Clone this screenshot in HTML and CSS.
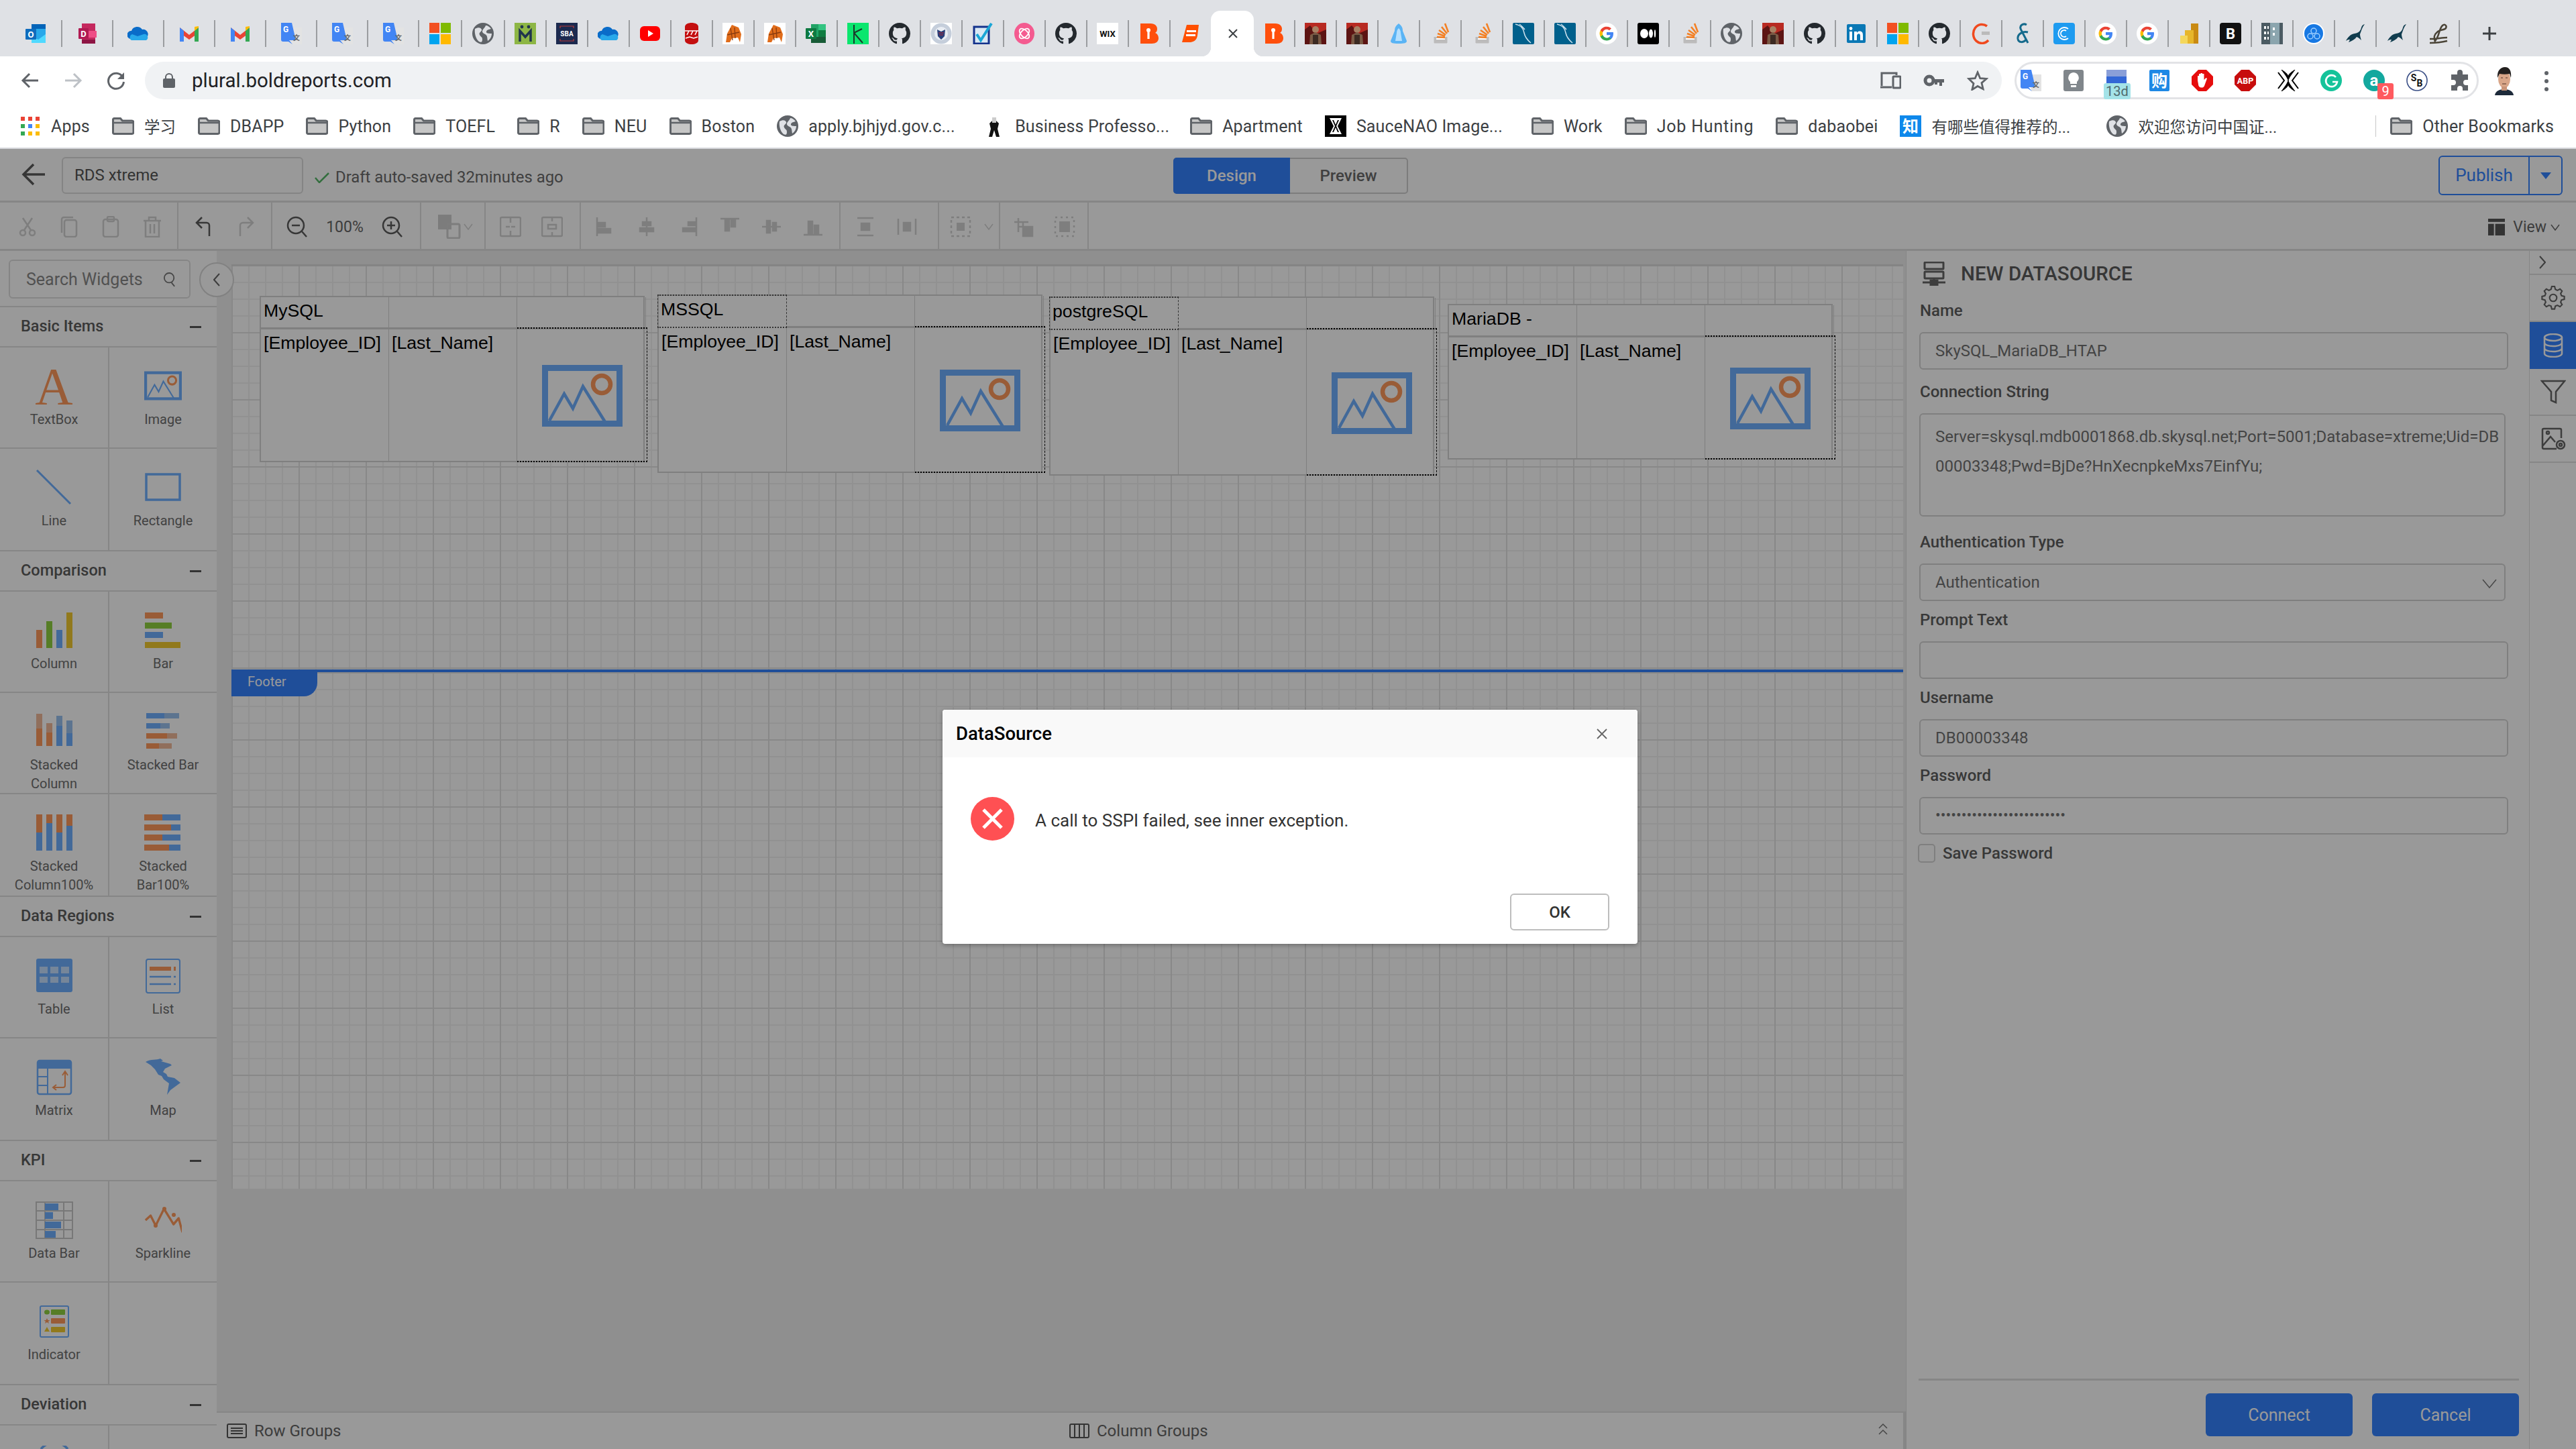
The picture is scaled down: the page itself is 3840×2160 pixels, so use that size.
FILE: index.html
```html
<!DOCTYPE html>
<html lang="en">
<head>
  <meta charset="UTF-8">
  <meta name="viewport" content="width=device-width, initial-scale=1.0">
  <title>Bold Reports Designer</title>
  <link rel="stylesheet" href="styles.css">
</head>
<body>
  <!-- shared favicons and widget icons -->
  <svg class="defs" width="0" height="0">
    <symbol id="outlook" viewBox="0 0 32 32"><rect x="9" y="2" width="21" height="28" fill="#28a8ea"/><rect x="9" y="2" width="21" height="7" fill="#0364b8"/><path d="M9 20l10 5 11-8v13H9z" fill="#50d9ff"/><rect x="0" y="9" width="16" height="16" rx="1" fill="#0f6cbd"/></symbol>
    <symbol id="onenote" viewBox="0 0 32 32"><rect x="8" y="1" width="20" height="30" fill="#c4285e"/><rect x="18" y="12" width="12" height="10" fill="#ef4d86"/><rect x="8" y="25" width="20" height="6" fill="#8e1544"/><rect x="3" y="8" width="15" height="16" rx="1" fill="#b01a52"/></symbol>
    <symbol id="onedrive" viewBox="0 0 32 32"><path d="M5 24a6 6 0 0 1 1-12 9 9 0 0 1 16-2 7 7 0 0 1 3 14z" fill="#0a6cc9"/><path d="M6 26a5 5 0 0 1 1-9l8 3 9-3a5 5 0 0 1 4 9z" fill="#28a8ea"/></symbol>
    <symbol id="gmail" viewBox="0 0 32 32"><path d="M2 7l14 11L30 7v8L16 25 2 15z" fill="#ea4335"/><path d="M2 7v21h6V12z" fill="#4285f4"/><path d="M24 12v16h6V7z" fill="#34a853"/><path d="M24 6v6l6-5V5z" fill="#fbbc04"/></symbol>
    <symbol id="gtrans" viewBox="0 0 32 32"><path d="M13 7h19v25H17z" fill="#e3e3e3"/><path d="M1 0h16l6 26H13l5 6-6-4H4a3 3 0 0 1-3-3z" fill="#4285f4"/></symbol>
    <symbol id="ms" viewBox="0 0 32 32"><rect width="15" height="15" fill="#f25022"/><rect x="17" width="15" height="15" fill="#7fba00"/><rect y="17" width="15" height="15" fill="#00a4ef"/><rect x="17" y="17" width="15" height="15" fill="#ffb900"/></symbol>
    <symbol id="globe" viewBox="0 0 32 32"><circle cx="16" cy="16" r="16" fill="#5f6368"/><path d="M4 9c5-3 9-2 10 1s-5 4-3 8 4 2 4 7-3 4-5 3C5 24 3 15 4 9zM20 4c3 0 6 2 8 5-3 1-6 1-7 4s5 3 8 3c0 5-3 9-6 11-1-5 0-8-4-10s-5-4-3-7 3-3 4-6z" fill="#dfe1e5"/></symbol>
    <symbol id="meet" viewBox="0 0 32 32"><rect width="32" height="32" fill="#8db645"/><path d="M8 28V12l8 9 8-9v16" fill="none" stroke="#20354d" stroke-width="3.5"/><circle cx="11" cy="6" r="2.4" fill="#20354d"/><circle cx="21" cy="6" r="2.4" fill="#20354d"/></symbol>
    <symbol id="sba" viewBox="0 0 32 32"><rect width="32" height="32" fill="#1c2a4f"/><path d="M6 8V5h20v3M6 24v3h20v-3" fill="none" stroke="#b73b3b" stroke-width="1.2"/></symbol>
    <symbol id="yt" viewBox="0 0 32 32"><rect x="1" y="5" width="30" height="22" rx="6" fill="#f00"/><path d="M13 11l8 5-8 5z" fill="#fff"/></symbol>
    <symbol id="redcan" viewBox="0 0 32 32"><path d="M6 6c0-8 20-8 20 0v20c0 8-20 8-20 0z" fill="#c40f10"/><path d="M6 12h20M9 18l3-6M15 18l3-6M21 18l3-6M7 23l6-2 6 2 6-2" stroke="#fff" stroke-width="1.6" fill="none"/></symbol>
    <symbol id="bull" viewBox="0 0 32 32"><rect width="32" height="32" fill="#fff"/><path d="M5 29l2-13 7-13 10 4 4 10-2 12-3-7-9 1-3 6z" fill="#e06c1a"/><path d="M12 8l3 18M18 7l1 16M7 18l18-4" stroke="#8a3b0e" stroke-width="1.3"/></symbol>
    <symbol id="excel" viewBox="0 0 32 32"><rect x="8" y="2" width="22" height="28" fill="#21a366"/><rect x="19" y="2" width="11" height="9" fill="#33c481"/><rect x="8" y="21" width="22" height="9" fill="#185c37"/><rect x="19" y="11" width="11" height="10" fill="#107c41"/><rect y="8" width="16" height="16" rx="1" fill="#0e7a42"/></symbol>
    <symbol id="kgreen" viewBox="0 0 32 32"><rect width="32" height="32" fill="#0be66e"/><path d="M10 3v28M10 15l12-6M10 15l13 15" stroke="#1a3b2b" stroke-width="2" fill="none"/></symbol>
    <symbol id="github" viewBox="0 0 16 16"><path fill="#24292e" d="M8 0C3.58 0 0 3.58 0 8c0 3.54 2.29 6.53 5.47 7.59.4.07.55-.17.55-.38 0-.19-.01-.82-.01-1.49-2.01.37-2.53-.49-2.69-.94-.09-.23-.48-.94-.82-1.13-.28-.15-.68-.52-.01-.53.63-.01 1.08.58 1.23.82.72 1.21 1.87.87 2.33.66.07-.52.28-.87.51-1.07-1.78-.2-3.64-.89-3.64-3.95 0-.87.31-1.59.82-2.15-.08-.2-.36-1.02.08-2.12 0 0 .67-.21 2.2.82a7.4 7.4 0 0 1 4 0c1.53-1.04 2.2-.82 2.2-.82.44 1.1.16 1.92.08 2.12.51.56.82 1.27.82 2.15 0 3.07-1.87 3.75-3.65 3.95.29.25.54.73.54 1.48 0 1.07-.01 1.93-.01 2.2 0 .21.15.46.55.38A8.01 8.01 0 0 0 16 8c0-4.42-3.58-8-8-8z"/></symbol>
    <symbol id="dhs" viewBox="0 0 32 32"><rect width="32" height="32" fill="#fff"/><circle cx="16" cy="16" r="15.500" fill="#c5cedb"/><circle cx="16" cy="16" r="10" fill="#e9edf3"/><path d="M10 10l6 3 6-3-1 10-5 5-5-5z" fill="#28407a"/><path d="M12 15h8M13 18h6" stroke="#b5202b" stroke-width="1.200"/></symbol>
    <symbol id="check" viewBox="0 0 32 32"><rect x="3" y="6" width="22" height="25" fill="#d9e8f4" stroke="#14328c" stroke-width="3"/><path d="M7 17l6 9L29 1" fill="none" stroke="#1aa6d6" stroke-width="4"/></symbol>
    <symbol id="pink" viewBox="0 0 32 32"><ellipse cx="16" cy="16" rx="15" ry="16" fill="#f45b90"/><ellipse cx="16" cy="16" rx="9" ry="5" fill="none" stroke="#fff" stroke-width="1.8" transform="rotate(45 16 16)"/><ellipse cx="16" cy="16" rx="9" ry="5" fill="none" stroke="#fff" stroke-width="1.8" transform="rotate(-45 16 16)"/></symbol>
    <symbol id="white" viewBox="0 0 32 32"><rect width="32" height="32" fill="#fff"/></symbol>
    <symbol id="bold" viewBox="0 0 32 32"><path d="M3 1h15c7 0 10 4 10 8 0 3-1 5-3 6 3 1 5 4 5 8 0 5-4 8-10 8H3z" fill="#ff4f0c"/><circle cx="15" cy="11" r="3" fill="#fff"/><rect x="13.4" y="12" width="3.2" height="12" fill="#fff"/></symbol>
    <symbol id="orange-e" viewBox="0 0 32 32"><path d="M10 3h18l-2 16c-1 7-6 10-12 10H3z" fill="#ff5000"/><rect x="10" y="11" width="14" height="3" fill="#fff"/><rect x="9" y="17" width="14" height="3" fill="#fff"/></symbol>
    <symbol id="warrior" viewBox="0 0 32 32"><rect width="32" height="32" fill="#5c1413"/><path d="M0 0h32v10L18 16 8 4 0 10z" fill="#b82a22"/><circle cx="16" cy="10" r="5" fill="#a88063"/><path d="M7 32l1-14 8-4 8 4 1 14z" fill="#7a5a45"/><path d="M12 18h8v14h-8z" fill="#3c2a22"/></symbol>
    <symbol id="bell" viewBox="0 0 32 32"><path d="M16 1c4 3 6 6 6 11l6 15c0 3-3 4-12 4S4 30 4 27l6-15c0-5 2-8 6-11z" fill="#5ab4f5"/><path d="M16 8c2 2 3 4 3 7l2 12H11l2-12c0-3 1-5 3-7z" fill="#b5e0ff"/></symbol>
    <symbol id="so" viewBox="0 0 32 32"><path d="M7 21v9h19v-9" fill="#bcbbbb" stroke="#bcbbbb"/><path d="M10 25h13v-2H10z" fill="#fff"/><path d="M11 21l12 1M12 16l11 4M14 11l10 7M18 6l8 10M23 1l5 13" stroke="#f48024" stroke-width="2.6"/></symbol>
    <symbol id="mysql" viewBox="0 0 32 32"><rect width="32" height="32" rx="2" fill="#00608c"/><path d="M4 2c5 1 11 3 13 13 1 5 4 10 10 15M10 2c3 2 6 6 8 8" fill="none" stroke="#cfe3ee" stroke-width="1.5"/></symbol>
    <symbol id="google" viewBox="0 0 32 32"><circle cx="16" cy="16" r="16" fill="#fff"/><path d="M26 16.3c0-.8-.1-1.5-.2-2.2H16v4.2h5.6a4.8 4.8 0 0 1-2.1 3.2v2.6h3.4c2-1.8 3.1-4.6 3.1-7.8z" fill="#4285f4"/><path d="M16 26.5c2.8 0 5.2-.9 6.9-2.5l-3.4-2.6c-.9.6-2.1 1-3.5 1-2.7 0-5-1.8-5.8-4.3H6.7v2.7a10.5 10.5 0 0 0 9.3 5.7z" fill="#34a853"/><path d="M10.2 18.1a6.3 6.3 0 0 1 0-4.1v-2.7H6.7a10.5 10.5 0 0 0 0 9.5z" fill="#fbbc05"/><path d="M16 9.7c1.5 0 2.9.5 4 1.6l3-3A10.5 10.5 0 0 0 6.7 11.3l3.5 2.7c.8-2.5 3.1-4.3 5.8-4.3z" fill="#ea4335"/></symbol>
    <symbol id="medium" viewBox="0 0 32 32"><rect width="32" height="32" rx="3" fill="#000"/><ellipse cx="10" cy="16" rx="6" ry="7" fill="#fff"/><ellipse cx="20" cy="16" rx="3" ry="6.5" fill="#fff"/><ellipse cx="26" cy="16" rx="1.2" ry="6" fill="#fff"/></symbol>
    <symbol id="linkedin" viewBox="0 0 32 32"><rect x="2" y="2" width="28" height="28" rx="2" fill="#0a78b5"/><rect x="6" y="13" width="4" height="13" fill="#fff"/><circle cx="8" cy="8.5" r="2.4" fill="#fff"/><path d="M13 13h4v2c1-2 3-2.400 4-2.400 4 0 5 2.400 5 6V26h-4v-6.500c0-2-.5-3.300-2-3.300-2 0-3 1.300-3 3.300V26h-4z" fill="#fff"/></symbol>
    <symbol id="carc" viewBox="0 0 32 32"><path d="M25 5a13 14 0 1 0 2 21" fill="none" stroke="#f0491e" stroke-width="3.500"/><rect x="17" y="13" width="12" height="5" fill="#bbb"/></symbol>
    <symbol id="amp" viewBox="0 0 32 32"><path d="M22 3c-5-3-12 1-8 8l10 19M24 14c-8-2-16 3-15 10 1 6 9 6 12 1" fill="none" stroke="#156a8c" stroke-width="3"/></symbol>
    <symbol id="eblue" viewBox="0 0 32 32"><rect width="32" height="32" rx="4" fill="#1e9bf0"/><path d="M22 9a9 9 0 1 0 0 14M19 12a5 5 0 1 0 0 8" fill="none" stroke="#fff" stroke-width="1.800"/></symbol>
    <symbol id="pbi" viewBox="0 0 32 32"><rect x="19" y="1" width="11" height="30" fill="#c98a12"/><rect x="10" y="11" width="13" height="20" fill="#e7b62a"/><rect x="3" y="19" width="11" height="12" fill="#f4d75c"/></symbol>
    <symbol id="building" viewBox="0 0 32 32"><rect width="32" height="32" fill="#8ba5ae"/><rect width="13" height="32" fill="#4b5b63"/><path d="M4 5h3v4H4zM9 5h2v4H9zM4 13h3v4H4zM9 13h2v4H9zM4 21h3v4H4zM9 21h2v4H9zM17 7h3v4h-3zM17 15h3v4h-3z" fill="#fff"/><rect x="27" width="5" height="32" fill="#4b5b63"/></symbol>
    <symbol id="bluecircle" viewBox="0 0 32 32"><circle cx="16" cy="16" r="16" fill="#fff"/><circle cx="16" cy="16" r="14" fill="#1778e3"/><circle cx="16" cy="12" r="4" fill="none" stroke="#9fd0ff" stroke-width="1.500"/><circle cx="11" cy="20" r="4" fill="none" stroke="#9fd0ff" stroke-width="1.500"/><circle cx="21" cy="20" r="4" fill="none" stroke="#9fd0ff" stroke-width="1.500"/></symbol>
    <symbol id="maria" viewBox="0 0 32 32"><path d="M30 2c-3 1-4 2-5 5-1 4-3 8-10 9-6 1-10 5-13 11 3-2 4-2 6-2l-2 4c5-2 9-4 12-8 3 1 6 4 7 5-1-3-2-6-2-9 2-5 3-10 7-15z" fill="#103c4e"/></symbol>
    <symbol id="script" viewBox="0 0 32 32"><path d="M3 30c8 0 18-1 26-3M3 24c10 0 18-2 26-2M10 28c8-8 6-18 12-24 3-3 7 0 5 4-2 3-8 2-12 5-5 4-7 8-4 15" fill="none" stroke="#4a4437" stroke-width="2.500"/></symbol>
    <symbol id="folder" viewBox="0 0 33 26"><path d="M1.500 4a2 2 0 0 1 2-2.500h9l3 3.500h14a2.500 2.500 0 0 1 2.500 2.500V22a2.500 2.500 0 0 1-2.500 2.500h-26A2 2 0 0 1 1.500 22z" fill="#c6c6c6" stroke="#5f6368" stroke-width="3"/><path d="M2 8h29" stroke="#5f6368" stroke-width="2.500"/></symbol>

    <symbol id="pic" viewBox="0 0 120 92"><path d="M4.500 4.500h111v83H4.500z" fill="none" stroke="#6fb0ff" stroke-width="9"/><path d="M11 83l22-40 13 22 15-33 33 53" fill="none" stroke="#6fb0ff" stroke-width="4.500"/><circle cx="89" cy="29" r="13" fill="none" stroke="#ff9a5c" stroke-width="6.500"/></symbol>
    <symbol id="gear" viewBox="0 0 32 34"><path d="M14 1h4l1 4 3 1.500 3.600-2 2.900 2.900-2 3.600 1.200 3 4 1v4l-4 1-1.200 3 2 3.600-2.900 2.900-3.600-2-3 1.200-1 4h-4l-1-4-3-1.200-3.600 2-2.900-2.900 2-3.600-1.200-3-4-1v-4l4-1 1.200-3-2-3.600 2.900-2.900 3.600 2 3-1.500z" fill="none" stroke="currentColor" stroke-width="2"/><circle cx="16" cy="17" r="5" fill="none" stroke="currentColor" stroke-width="2"/></symbol>
  </svg>

  <div class="chrome">
    <div class="tabstrip">
      <div class="tab wide"><svg class="fav" viewBox="0 0 32 32"><use href="#outlook"/><text x="8" y="22" class="ico-t" font-size="13" text-anchor="middle" fill="#fff">O</text></svg></div>
      <div class="tab wide"><svg class="fav" viewBox="0 0 32 32"><use href="#onenote"/><text x="10.500" y="21" class="ico-t" font-size="13" text-anchor="middle" fill="#fff">D</text></svg></div>
      <div class="tab wide"><svg class="fav"><use href="#onedrive"/></svg></div>
      <div class="tab wide"><svg class="fav"><use href="#gmail"/></svg></div>
      <div class="tab wide"><svg class="fav"><use href="#gmail"/></svg></div>
      <div class="tab wide"><svg class="fav" viewBox="0 0 32 32"><use href="#gtrans"/><text x="8" y="14" class="ico-t" font-size="12" text-anchor="middle" fill="#fff">G</text><text x="24" y="26" class="ico-t" font-size="10" text-anchor="middle" fill="#666">文</text></svg></div>
      <div class="tab wide"><svg class="fav" viewBox="0 0 32 32"><use href="#gtrans"/><text x="8" y="14" class="ico-t" font-size="12" text-anchor="middle" fill="#fff">G</text><text x="24" y="26" class="ico-t" font-size="10" text-anchor="middle" fill="#666">文</text></svg></div>
      <div class="tab wide"><svg class="fav" viewBox="0 0 32 32"><use href="#gtrans"/><text x="8" y="14" class="ico-t" font-size="12" text-anchor="middle" fill="#fff">G</text><text x="24" y="26" class="ico-t" font-size="10" text-anchor="middle" fill="#666">文</text></svg></div>
      <div class="tab mid"><svg class="fav"><use href="#ms"/></svg></div>
      <div class="tab mid"><svg class="fav"><use href="#globe"/></svg></div>
      <div class="tab"><svg class="fav"><use href="#meet"/></svg></div>
      <div class="tab"><svg class="fav" viewBox="0 0 32 32"><use href="#sba"/><text x="16" y="20" class="ico-t" font-size="10" text-anchor="middle" fill="#fff">SBA</text></svg></div>
      <div class="tab"><svg class="fav"><use href="#onedrive"/></svg></div>
      <div class="tab"><svg class="fav"><use href="#yt"/></svg></div>
      <div class="tab"><svg class="fav"><use href="#redcan"/></svg></div>
      <div class="tab"><svg class="fav"><use href="#bull"/></svg></div>
      <div class="tab"><svg class="fav"><use href="#bull"/></svg></div>
      <div class="tab"><svg class="fav" viewBox="0 0 32 32"><use href="#excel"/><text x="8" y="21" class="ico-t" font-size="13" text-anchor="middle" fill="#fff">X</text></svg></div>
      <div class="tab"><svg class="fav"><use href="#kgreen"/></svg></div>
      <div class="tab"><svg class="fav"><use href="#github"/></svg></div>
      <div class="tab"><svg class="fav"><use href="#dhs"/></svg></div>
      <div class="tab"><svg class="fav"><use href="#check"/></svg></div>
      <div class="tab"><svg class="fav"><use href="#pink"/></svg></div>
      <div class="tab"><svg class="fav"><use href="#github"/></svg></div>
      <div class="tab"><svg class="fav" viewBox="0 0 32 32"><use href="#white"/><text x="16" y="21" class="ico-t" font-size="13" text-anchor="middle" fill="#111">WIX</text></svg></div>
      <div class="tab"><svg class="fav"><use href="#bold"/></svg></div>
      <div class="tab"><svg class="fav"><use href="#orange-e"/></svg></div>
      <div class="tab active"><svg class="tab-x" viewBox="0 0 16 16"><path d="M2 2l12 12M14 2L2 14"/></svg></div>
      <div class="tab"><svg class="fav"><use href="#bold"/></svg></div>
      <div class="tab"><svg class="fav"><use href="#warrior"/></svg></div>
      <div class="tab"><svg class="fav"><use href="#warrior"/></svg></div>
      <div class="tab"><svg class="fav"><use href="#bell"/></svg></div>
      <div class="tab"><svg class="fav"><use href="#so"/></svg></div>
      <div class="tab"><svg class="fav"><use href="#so"/></svg></div>
      <div class="tab"><svg class="fav"><use href="#mysql"/></svg></div>
      <div class="tab"><svg class="fav"><use href="#mysql"/></svg></div>
      <div class="tab"><svg class="fav"><use href="#google"/></svg></div>
      <div class="tab"><svg class="fav"><use href="#medium"/></svg></div>
      <div class="tab"><svg class="fav"><use href="#so"/></svg></div>
      <div class="tab"><svg class="fav"><use href="#globe"/></svg></div>
      <div class="tab"><svg class="fav"><use href="#warrior"/></svg></div>
      <div class="tab"><svg class="fav"><use href="#github"/></svg></div>
      <div class="tab"><svg class="fav"><use href="#linkedin"/></svg></div>
      <div class="tab"><svg class="fav"><use href="#ms"/></svg></div>
      <div class="tab"><svg class="fav"><use href="#github"/></svg></div>
      <div class="tab"><svg class="fav"><use href="#carc"/></svg></div>
      <div class="tab"><svg class="fav"><use href="#amp"/></svg></div>
      <div class="tab"><svg class="fav"><use href="#eblue"/></svg></div>
      <div class="tab"><svg class="fav"><use href="#google"/></svg></div>
      <div class="tab"><svg class="fav"><use href="#google"/></svg></div>
      <div class="tab"><svg class="fav"><use href="#pbi"/></svg></div>
      <div class="tab"><svg class="fav" viewBox="0 0 32 32"><rect width="32" height="32" rx="4" fill="#111"/><text x="16" y="24" class="ico-t" font-size="22" text-anchor="middle" fill="#fff">B</text></svg></div>
      <div class="tab"><svg class="fav"><use href="#building"/></svg></div>
      <div class="tab"><svg class="fav"><use href="#bluecircle"/></svg></div>
      <div class="tab"><svg class="fav"><use href="#maria"/></svg></div>
      <div class="tab"><svg class="fav"><use href="#maria"/></svg></div>
      <div class="tab"><svg class="fav"><use href="#script"/></svg></div>
      <svg class="new-tab" viewBox="0 0 24 24"><path d="M12 2v20M2 12h20"/></svg>
    </div>

    <div class="omnirow">
      <svg class="nav-btn" viewBox="0 0 28 28"><path d="M26 14H4M13 4L3 14l10 10"/></svg>
      <svg class="nav-btn off" viewBox="0 0 28 28"><path d="M2 14h22M15 4l10 10-10 10"/></svg>
      <svg class="nav-btn reload" viewBox="0 0 28 28"><path d="M24 9a11.500 11.500 0 1 0 1.500 7"/><path class="solid" d="M26 2v10H16z"/></svg>
      <div class="omnibox">
        <svg class="lock" viewBox="0 0 18 22"><path d="M4 9V6a5 5 0 0 1 10 0v3" fill="none" stroke="#5f6368" stroke-width="2"/><rect y="8" width="18" height="14" rx="2" fill="#5f6368"/></svg>
        <span class="url">plural.boldreports.com</span>
        <svg class="omni-ic devices" viewBox="0 0 32 28"><path d="M3 22V3h22v3M1 24h17" fill="none" stroke="#5f6368" stroke-width="3"/><rect x="20" y="8" width="11" height="17" rx="1" fill="none" stroke="#5f6368" stroke-width="3"/></svg>
        <svg class="omni-ic key" viewBox="0 0 30 22"><circle cx="8" cy="11" r="6" fill="none" stroke="#5f6368" stroke-width="5"/><path d="M14 9h16v5h-3v5h-4v-5h-3v3h-4v-3h-2z" fill="#5f6368"/></svg>
        <svg class="omni-ic star" viewBox="0 0 32 32"><path d="M16 3l4 9.500 10 .8-7.600 6.500 2.300 9.700L16 25l-8.700 5.500 2.300-9.700L2 13.300l10-.8z" fill="none" stroke="#5f6368" stroke-width="3"/></svg>
      </div>
      <div class="ext-pill">
        <svg class="ext" viewBox="0 0 32 32"><use href="#gtrans"/><text x="8" y="14" class="ico-t" font-size="12" text-anchor="middle" fill="#fff">G</text><text x="24" y="26" class="ico-t" font-size="10" text-anchor="middle" fill="#666">文</text></svg>
        <svg class="ext" viewBox="0 0 32 32"><rect x="1" width="30" height="32" rx="3" fill="#80868b"/><path d="M16 4a8 8 0 0 0-5 14v3h10v-3a8 8 0 0 0-5-14z" fill="#fff"/><rect x="12" y="23" width="8" height="3" fill="#fff"/></svg>
        <div class="ext badge-wrap"><svg class="ext-in" viewBox="0 0 32 32"><rect x="1" y="8" width="30" height="20" rx="2" fill="#3367d6"/><rect x="1" width="30" height="10" fill="#8a9fd8"/></svg><span class="badge cyan">13d</span></div>
        <svg class="ext" viewBox="0 0 32 32"><rect x="1" width="30" height="32" rx="2" fill="#1e88e5"/><text x="16" y="25" class="ico-t" font-size="24" text-anchor="middle" fill="#fff">购</text></svg>
        <svg class="ext" viewBox="0 0 32 32"><path d="M10 0h12l10 10v12L22 32H10L0 22V10z" fill="#e60d0d"/><path d="M9 16V9l2 0v5V6h2.500v8V5H16v9V6h2.500v9l3-3 1.500 1-4 11c-1 2-2 2.500-4 2.500-3 0-5-2-5-5z" fill="#fff"/></svg>
        <svg class="ext" viewBox="0 0 32 32"><path d="M10 0h12l10 10v12L22 32H10L0 22V10z" fill="#c70d0d"/><text x="16" y="21" class="ico-t" font-size="12.500" text-anchor="middle" fill="#fff">ABP</text></svg>
        <svg class="ext" viewBox="0 0 32 32"><path d="M6 0c6 8 9 12 10 16-1 4-4 8-10 16 8-5 10-8 10-11 0 3 2 6 10 11-6-8-9-12-10-16 1-4 4-8 10-16-8 5-10 8-10 11 0-3-2-6-10-11z" fill="#000" stroke="#000" stroke-width="1"/><path d="M1 4l9 12-9 12M31 4l-9 12 9 12" fill="none" stroke="#000" stroke-width="2"/></svg>
        <svg class="ext" viewBox="0 0 32 32"><circle cx="16" cy="16" r="16" fill="#15c39a"/><path d="M23 11a8.500 8.500 0 1 0 2 7h-7" fill="none" stroke="#fff" stroke-width="2.600"/></svg>
        <div class="ext badge-wrap"><svg class="ext-in" viewBox="0 0 32 32"><circle cx="16" cy="16" r="16" fill="#13a89e"/><text x="16" y="24" class="ico-t" font-size="24" text-anchor="middle" fill="#fff">a</text></svg><span class="badge red">9</span></div>
        <svg class="ext" viewBox="0 0 32 32"><circle cx="16" cy="16" r="15" fill="#fff" stroke="#3a4f86" stroke-width="1.600"/><text x="11" y="17" class="ico-t" font-size="14" text-anchor="middle" fill="#111">S</text><text x="20" y="25" class="ico-t" font-size="14" text-anchor="middle" fill="#111">B</text></svg>
        <svg class="ext" viewBox="0 0 32 32"><path d="M12 4a4 4 0 0 1 8 0v3h8v8h-3a4 4 0 0 0 0 8h3v8H20v-3a4 4 0 0 0-8 0v3H3V23h3a4 4 0 0 0 0-8H3V7h9z" fill="#5f6368"/></svg>
      </div>
      <svg class="avatar" viewBox="0 0 28 42"><path d="M0 42c1-7 8-9 14-9s13 2 14 9z" fill="#1d2a3a"/><ellipse cx="14" cy="18" rx="9" ry="13" fill="#d9a689"/><path d="M4 16C3 5 9 0 15 0c7 0 10 6 9 16l-2-6c-5 1-10 1-15 0z" fill="#23201f"/><rect x="10" y="29" width="8" height="6" fill="#c99478"/><path d="M9 16h3M16 16h3M11 25h6" stroke="#54352a" stroke-width="1.200"/></svg>
      <svg class="kebab" viewBox="0 0 6 30"><circle cx="3" cy="3" r="3"/><circle cx="3" cy="15" r="3"/><circle cx="3" cy="27" r="3"/></svg>
    </div>

    <div class="bookmarks">
      <div class="bm"><svg class="apps" viewBox="0 0 28 28"><path fill="#ea4335" d="M0 0h6v6H0zM11 0h6v6h-6zM22 0h6v6h-6z"/><path fill="#34a853" d="M0 11h6v6H0z"/><path fill="#4285f4" d="M11 11h6v6h-6z"/><path fill="#fbbc04" d="M22 11h6v6h-6z"/><path fill="#34a853" d="M0 22h6v6H0z"/><path fill="#fbbc04" d="M11 22h6v6h-6zM22 22h6v6h-6z"/></svg><span>Apps</span></div>
      <div class="bm"><svg class="folder"><use href="#folder"/></svg><span class="cjk">学习</span></div>
      <div class="bm"><svg class="folder"><use href="#folder"/></svg><span>DBAPP</span></div>
      <div class="bm"><svg class="folder"><use href="#folder"/></svg><span>Python</span></div>
      <div class="bm"><svg class="folder"><use href="#folder"/></svg><span>TOEFL</span></div>
      <div class="bm"><svg class="folder"><use href="#folder"/></svg><span>R</span></div>
      <div class="bm"><svg class="folder"><use href="#folder"/></svg><span>NEU</span></div>
      <div class="bm"><svg class="folder"><use href="#folder"/></svg><span>Boston</span></div>
      <div class="bm trunc"><svg class="bm-fav"><use href="#globe"/></svg><span>apply.bjhjyd.gov.c...</span></div>
      <div class="bm trunc"><svg class="bm-fav" viewBox="0 0 32 32"><path d="M8 32l3-12-2-8 4-4V3h6v5l4 4-2 8 3 12h-5l-3-10-3 10z" fill="#111"/><path d="M13 3h6v8h-6z" fill="#ccc"/></svg><span>Business Professo...</span></div>
      <div class="bm"><svg class="folder"><use href="#folder"/></svg><span>Apartment</span></div>
      <div class="bm trunc"><svg class="bm-fav" viewBox="0 0 32 32"><rect width="32" height="32" fill="#000"/><path d="M7 4h18L19 16l6 12H7l6-12z" fill="#fff"/><path d="M11 7l4 9-4 9h2l3-7 3 7h2l-4-9 4-9h-2l-3 7-3-7z" fill="#000"/></svg><span>SauceNAO Image...</span></div>
      <div class="bm"><svg class="folder"><use href="#folder"/></svg><span>Work</span></div>
      <div class="bm"><svg class="folder"><use href="#folder"/></svg><span class="jobs">Job Hunting</span></div>
      <div class="bm"><svg class="folder"><use href="#folder"/></svg><span>dabaobei</span></div>
      <div class="bm trunc"><svg class="bm-fav" viewBox="0 0 32 32"><rect width="32" height="32" fill="#0e88eb"/><text x="16" y="25" class="ico-t" font-size="24" text-anchor="middle" fill="#fff">知</text></svg><span class="cjk">有哪些值得推荐的...</span></div>
      <div class="bm trunc"><svg class="bm-fav"><use href="#globe"/></svg><span class="cjk">欢迎您访问中国证...</span></div>
      <div class="bm-sep"></div>
      <div class="bm"><svg class="folder"><use href="#folder"/></svg><span>Other Bookmarks</span></div>
    </div>
  </div>

  <div class="app">
    <header class="app-head">
      <svg class="back" viewBox="0 0 36 34"><path d="M35 17H3M18 2L3 17l15 15"/></svg>
      <div class="doc-name">RDS xtreme</div>
      <svg class="saved-check" viewBox="0 0 22 16"><path d="M1 8l6 7L21 1"/></svg>
      <span class="saved">Draft auto-saved 32minutes ago</span>
      <div class="mode">
        <span class="mode-btn on">Design</span>
        <span class="mode-btn">Preview</span>
      </div>
      <div class="publish">
        <span class="pub-main">Publish</span>
        <span class="pub-arrow"><i></i></span>
      </div>
    </header>

    <div class="toolbar">
      <div class="tb-group g1">
        <svg class="tb off" viewBox="0 0 32 32"><circle cx="9" cy="25" r="4"/><circle cx="23" cy="25" r="4"/><path d="M11 21L23 3M21 21L9 3"/></svg>
        <svg class="tb off" viewBox="0 0 32 32"><rect x="9" y="6" width="18" height="25" rx="3"/><path d="M5 25V5a3 3 0 0 1 3-3h14"/></svg>
        <svg class="tb off" viewBox="0 0 32 32"><rect x="5" y="5" width="22" height="26" rx="3"/><rect x="11" y="1" width="10" height="7" rx="2"/></svg>
        <svg class="tb off" viewBox="0 0 32 32"><path d="M3 7h26M11 7V2h10v5M6 7v24h20V7M13 12v14M19 12v14"/></svg>
      </div>
      <div class="tb-group g2">
        <svg class="tb" viewBox="0 0 32 32"><path d="M24 30V14a4 4 0 0 0-4-4H6M13 2l-8 8 8 8"/></svg>
        <svg class="tb off" viewBox="0 0 32 32"><path d="M8 30V14a4 4 0 0 1 4-4h14M19 2l8 8-8 8"/></svg>
      </div>
      <div class="tb-group g3">
        <svg class="tb" viewBox="0 0 32 32"><circle cx="14" cy="14" r="12"/><path d="M23 23l7 8M8 14h12"/></svg>
        <span class="zoom-pct">100%</span>
        <svg class="tb" viewBox="0 0 32 32"><circle cx="14" cy="14" r="12"/><path d="M23 23l7 8M8 14h12M14 8v12"/></svg>
      </div>
      <div class="tb-group g4">
        <svg class="tb-fill" viewBox="0 0 34 36"><rect x="0" y="0" width="20" height="22" fill="#cfcfcf" stroke="none"/><rect x="14" y="14" width="18" height="21" rx="2" fill="none" stroke="#d0d0d0" stroke-width="3"/></svg>
        <svg class="tb-chev" viewBox="0 0 14 10"><path d="M1 1l6 8 6-8"/></svg>
      </div>
      <div class="tb-group g5">
        <svg class="tb off" viewBox="0 0 32 32"><rect x="1" y="2" width="30" height="28" rx="2"/><path d="M16 2v8M16 22v8M9 16h6M17 16h6" /></svg>
        <svg class="tb off" viewBox="0 0 32 32"><rect x="1" y="2" width="30" height="28" rx="2"/><path d="M16 2v6M16 24v6M10 13h12v6H10z"/></svg>
      </div>
      <div class="tb-group g6">
        <svg class="tb off" viewBox="0 0 32 32"><path d="M4 2v28M4 10h12v6H4zM4 19h20v6H4z" class="fillish"/></svg>
        <svg class="tb off" viewBox="0 0 32 32"><path d="M16 2v28M10 9h12v5H10zM6 18h20v5H6z" class="fillish"/></svg>
        <svg class="tb off" viewBox="0 0 32 32"><path d="M28 2v28M16 9h12v5H16zM8 18h20v5H8z" class="fillish"/></svg>
        <svg class="tb off" viewBox="0 0 32 32"><path d="M2 4h28M9 4v18h6V4zM18 4v12h6V4z" class="fillish"/></svg>
        <svg class="tb off" viewBox="0 0 32 32"><path d="M2 16h28M9 7v18h5V7zM18 10v12h5V10z" class="fillish"/></svg>
        <svg class="tb off" viewBox="0 0 32 32"><path d="M2 28h28M9 8v20h6V8zM18 14v14h6V14z" class="fillish"/></svg>
      </div>
      <div class="tb-group g7">
        <svg class="tb off" viewBox="0 0 32 32"><path d="M4 3h24M4 29h24M10 11h12v10H10z" class="fillish"/></svg>
        <svg class="tb off" viewBox="0 0 32 32"><path d="M3 4v24M29 4v24M11 10h10v12H11z" class="fillish"/></svg>
      </div>
      <div class="tb-group g8">
        <svg class="tb off" viewBox="0 0 32 32"><path d="M2 2h28v28H2z" stroke-dasharray="4 4"/><rect x="10" y="10" width="12" height="12" class="solid-off"/></svg>
        <svg class="tb-chev" viewBox="0 0 14 10"><path d="M1 1l6 8 6-8"/></svg>
      </div>
      <div class="tb-group g9">
        <svg class="tb off" viewBox="0 0 32 32"><path d="M3 9h21M9 3v21M8 16h16M16 8v16M16 16h14v14H16z" class="fillish"/></svg>
        <svg class="tb off" viewBox="0 0 32 32"><path d="M2 2h28v28H2z" stroke-dasharray="3 5"/><rect x="8" y="8" width="16" height="16" class="solid-off"/></svg>
      </div>
      <div class="view-btn">
        <svg class="view-ic" viewBox="0 0 26 26"><rect width="26" height="5"/><rect y="8" width="9" height="18"/><rect x="11" y="8" width="15" height="18"/></svg>
        <span>View</span>
        <svg class="tb-chev dark" viewBox="0 0 14 10"><path d="M1 1l6 8 6-8"/></svg>
      </div>
    </div>

    <div class="workspace">
      <aside class="widgets">
        <div class="search-row">
          <div class="search">
            <span>Search Widgets</span>
            <svg viewBox="0 0 20 24"><circle cx="9" cy="10" r="8"/><path d="M13 18l5 6"/></svg>
          </div>
          <div class="collapse"><svg viewBox="0 0 10 20"><path d="M9 1L1 10l8 9"/></svg></div>
        </div>

        <div class="w-list">
          <div class="w-head"><span>Basic Items</span><i></i></div>
          <div class="w-grid">
            <div class="widget"><div class="glyph-a">A</div><span>TextBox</span></div>
            <div class="widget"><svg class="w-ic"><use href="#pic" x="0" y="5" width="56" height="44"/></svg><span>Image</span></div>
            <div class="widget"><svg class="w-ic" viewBox="0 0 56 56"><path d="M2 2l50 50" stroke="#6fb0ff" stroke-width="3"/></svg><span>Line</span></div>
            <div class="widget"><svg class="w-ic" viewBox="0 0 56 56"><rect x="3" y="8" width="50" height="38" fill="none" stroke="#6fb0ff" stroke-width="3.500"/></svg><span>Rectangle</span></div>
          </div>

          <div class="w-head"><span>Comparison</span><i></i></div>
          <div class="w-grid">
            <div class="widget"><svg class="w-ic" viewBox="0 0 56 56"><rect x="1" y="27" width="9" height="27" fill="#ff9a5c"/><rect x="16" y="14" width="9" height="40" fill="#8fd040"/><rect x="31" y="27" width="9" height="27" fill="#6fb0ff"/><rect x="46" y="1" width="9" height="53" fill="#f2ca30"/></svg><span>Column</span></div>
            <div class="widget"><svg class="w-ic" viewBox="0 0 56 56"><rect x="1" y="1" width="27" height="9" fill="#ff9a5c"/><rect x="1" y="16" width="40" height="9" fill="#8fd040"/><rect x="1" y="30" width="27" height="9" fill="#6fb0ff"/><rect x="1" y="45" width="53" height="9" fill="#f2ca30"/></svg><span>Bar</span></div>
            <div class="widget"><svg class="w-ic" viewBox="0 0 56 56"><rect x="1" y="1" width="9" height="22" fill="#f0b99a"/><rect x="1" y="23" width="9" height="26" fill="#ff9a5c"/><rect x="16" y="15" width="9" height="14" fill="#f0b99a"/><rect x="16" y="29" width="9" height="20" fill="#ff9a5c"/><rect x="31" y="4" width="9" height="15" fill="#99c2ee"/><rect x="31" y="19" width="9" height="30" fill="#6fb0ff"/><rect x="46" y="11" width="9" height="19" fill="#99c2ee"/><rect x="46" y="30" width="9" height="19" fill="#6fb0ff"/></svg><span>Stacked Column</span></div>
            <div class="widget"><svg class="w-ic" viewBox="0 0 56 56"><rect x="3" y="0" width="27" height="8" fill="#6fb0ff"/><rect x="30" y="0" width="22" height="8" fill="#99c2ee"/><rect x="3" y="15" width="21" height="8" fill="#6fb0ff"/><rect x="24" y="15" width="14" height="8" fill="#99c2ee"/><rect x="3" y="30" width="31" height="8" fill="#ff9a5c"/><rect x="34" y="30" width="15" height="8" fill="#f0b99a"/><rect x="3" y="45" width="19" height="8" fill="#ff9a5c"/><rect x="22" y="45" width="19" height="8" fill="#f0b99a"/></svg><span>Stacked Bar</span></div>
            <div class="widget"><svg class="w-ic" viewBox="0 0 56 56"><rect x="1" y="0" width="9" height="27" fill="#ff9a5c"/><rect x="1" y="27" width="9" height="27" fill="#6fb0ff"/><rect x="16" y="0" width="9" height="13" fill="#ff9a5c"/><rect x="16" y="13" width="9" height="41" fill="#6fb0ff"/><rect x="31" y="0" width="9" height="27" fill="#ff9a5c"/><rect x="31" y="27" width="9" height="27" fill="#6fb0ff"/><rect x="46" y="0" width="9" height="17" fill="#ff9a5c"/><rect x="46" y="17" width="9" height="37" fill="#6fb0ff"/></svg><span>Stacked Column100%</span></div>
            <div class="widget"><svg class="w-ic" viewBox="0 0 56 56"><rect y="0" width="27" height="9" fill="#ff9a5c"/><rect x="27" y="0" width="27" height="9" fill="#6fb0ff"/><rect y="15" width="40" height="9" fill="#ff9a5c"/><rect x="40" y="15" width="14" height="9" fill="#6fb0ff"/><rect y="30" width="27" height="9" fill="#ff9a5c"/><rect x="27" y="30" width="27" height="9" fill="#6fb0ff"/><rect y="45" width="37" height="9" fill="#ff9a5c"/><rect x="37" y="45" width="17" height="9" fill="#6fb0ff"/></svg><span>Stacked Bar100%</span></div>
          </div>

          <div class="w-head"><span>Data Regions</span><i></i></div>
          <div class="w-grid">
            <div class="widget"><svg class="w-ic" viewBox="0 0 56 56"><rect x="1" y="2" width="54" height="50" rx="3" fill="#6fb0ff"/><path d="M6 14h12v10H6zM22 14h12v10H22zM38 14h12v10H38zM6 29h12v9H6zM22 29h12v9H22zM38 29h12v9H38z" fill="#fff" opacity=".6"/></svg><span>Table</span></div>
            <div class="widget"><svg class="w-ic" viewBox="0 0 56 56"><rect x="3" y="3" width="50" height="50" rx="3" fill="none" stroke="#6fb0ff" stroke-width="2"/><rect x="8" y="14" width="32" height="6" fill="#ff9a5c"/><rect x="44" y="14" width="3" height="6" fill="#ff9a5c"/><path d="M8 29h32M8 40h32M44 29h3M44 40h3" stroke="#6fb0ff" stroke-width="2.500"/></svg><span>List</span></div>
            <div class="widget"><svg class="w-ic" viewBox="0 0 56 56"><rect x="3" y="3" width="50" height="50" rx="3" fill="none" stroke="#6fb0ff" stroke-width="2.500"/><rect x="3" y="3" width="50" height="12" fill="#6fb0ff"/><path d="M3 27h15M3 40h15M18 15v38" stroke="#6fb0ff" stroke-width="2"/><path d="M44 20v20a3 3 0 0 1-3 3H27M40 25l4-6 4 6M31 39l-5 4 5 4" fill="none" stroke="#ff9a5c" stroke-width="2"/></svg><span>Matrix</span></div>
            <div class="widget"><svg class="w-ic" viewBox="0 0 56 56"><path d="M2 5C10 0 18 3 24 0l4 3-3 1 14 4 2 2-10 5-3 5 5 3 2 4 10 2 9 7-15 11-5 7 3-17-8-6-3-5-5-2-5-8-6-6z" fill="#6fb0ff"/></svg><span>Map</span></div>
          </div>

          <div class="w-head"><span>KPI</span><i></i></div>
          <div class="w-grid">
            <div class="widget"><svg class="w-ic" viewBox="0 0 56 56"><path d="M1 1h54v54H1zM1 14h54M1 28h54M1 42h54M14 1v54M42 1v54" fill="none" stroke="#c8c8c8" stroke-width="2"/><rect x="14" y="3" width="20" height="10" fill="#6fb0ff"/><rect x="14" y="16" width="12" height="10" fill="#6fb0ff"/><rect x="14" y="30" width="24" height="10" fill="#6fb0ff"/><rect x="14" y="44" width="16" height="10" fill="#6fb0ff"/></svg><span>Data Bar</span></div>
            <div class="widget"><svg class="w-ic" viewBox="0 0 56 56"><path d="M2 30l8-7 8 15 13-25 15 23 8-9 6 21" fill="none" stroke="#ff9a5c" stroke-width="3.500" stroke-linejoin="round" transform="translate(0 -2) scale(.95 1)"/><circle cx="17" cy="36" r="3" fill="#ff9a5c"/><circle cx="30" cy="11" r="3" fill="#ff9a5c"/><circle cx="44" cy="20" r="3" fill="#ff9a5c"/></svg><span>Sparkline</span></div>
            <div class="widget"><svg class="w-ic" viewBox="0 0 56 56"><rect x="7" y="5" width="42" height="46" rx="2" fill="none" stroke="#6fb0ff" stroke-width="2"/><ellipse cx="17" cy="14" rx="4" ry="3.500" fill="#8fd040"/><rect x="23" y="10" width="21" height="8" rx="1" fill="#8fd040"/><path d="M17 23l1.500 3h3l-2.500 2 1 3-3-2-3 2 1-3-2.500-2h3z" fill="#ff9a5c"/><rect x="23" y="23" width="21" height="8" rx="1" fill="#ff9a5c"/><path d="M17 36l4 7h-8z" fill="#f2ca30"/><rect x="23" y="36" width="21" height="8" rx="1" fill="#f2ca30"/></svg><span>Indicator</span></div>
            <div class="widget"></div>
          </div>

          <div class="w-head"><span>Deviation</span><i></i></div>
          <div class="w-grid cut">
            <div class="widget"><svg class="w-ic-cut" viewBox="0 0 56 5"><path d="M8 5a26 26 0 0 1 40 0" fill="none" stroke="#6fb0ff" stroke-width="3.500"/></svg></div>
            <div class="widget"></div>
          </div>
        </div>
      </aside>

      <main class="design">
        <div class="design-scroll">
          <div class="canvas">
            <div class="band body-band">
              <div class="report t1">
                <div class="cell head">MySQL</div><div class="cell head"></div><div class="cell head"></div>
                <div class="cell">[Employee_ID]</div><div class="cell">[Last_Name]</div>
                <div class="cell img"><svg class="pic"><use href="#pic"/></svg></div>
              </div>
              <div class="report t2 picked">
                <div class="cell head">MSSQL</div><div class="cell head"></div><div class="cell head"></div>
                <div class="cell">[Employee_ID]</div><div class="cell">[Last_Name]</div>
                <div class="cell img"><svg class="pic"><use href="#pic"/></svg></div>
              </div>
              <div class="report t3 picked">
                <div class="cell head">postgreSQL</div><div class="cell head"></div><div class="cell head"></div>
                <div class="cell">[Employee_ID]</div><div class="cell">[Last_Name]</div>
                <div class="cell img"><svg class="pic"><use href="#pic"/></svg></div>
              </div>
              <div class="report t4">
                <div class="cell head">MariaDB -</div><div class="cell head"></div><div class="cell head"></div>
                <div class="cell">[Employee_ID]</div><div class="cell">[Last_Name]</div>
                <div class="cell img"><svg class="pic"><use href="#pic"/></svg></div>
              </div>
            </div>
            <div class="band-line"><span class="band-tag">Footer</span></div>
            <div class="band foot-band"></div>
          </div>
        </div>
        <div class="groups-bar">
          <div class="groups-half first">
            <svg class="grp-ic" viewBox="0 0 30 22"><rect x="1" y="1" width="28" height="20" rx="2"/><path d="M6 7h18M6 11h18M6 15h18"/></svg>
            <span>Row Groups</span>
          </div>
          <div class="groups-half">
            <svg class="grp-ic" viewBox="0 0 30 22"><rect x="1" y="1" width="28" height="20" rx="2"/><path d="M8 1v20M15 1v20M22 1v20"/></svg>
            <span>Column Groups</span>
          </div>
          <svg class="grp-up" viewBox="0 0 14 18"><path d="M1 7l6-6 6 6M1 16l6-6 6 6"/></svg>
        </div>
      </main>

      <section class="props">
        <div class="props-form">
          <h2 class="props-title">
            <svg viewBox="0 0 34 36"><rect x="3" y="1" width="28" height="10" rx="1"/><rect x="3" y="15" width="28" height="10" rx="1"/><path d="M17 25v6M0 31h34" /><rect x="12" y="28" width="10" height="7" class="db-solid"/></svg>
            NEW DATASOURCE
          </h2>
          <label>Name</label>
          <div class="field name">SkySQL_MariaDB_HTAP</div>
          <label>Connection String</label>
          <div class="field area">Server=skysql.mdb0001868.db.skysql.net;Port=5001;Database=xtreme;Uid=DB<br>00003348;Pwd=BjDe?HnXecnpkeMxs7EinfYu;</div>
          <label>Authentication Type</label>
          <div class="field select">Authentication<svg viewBox="0 0 22 14"><path d="M1 1l10 12L21 1"/></svg></div>
          <label>Prompt Text</label>
          <div class="field"></div>
          <label>Username</label>
          <div class="field">DB00003348</div>
          <label>Password</label>
          <div class="field secret">•••••••••••••••••••••••••</div>
          <div class="save-pw"><i></i><span>Save Password</span></div>
        </div>
        <div class="props-foot">
          <button class="btn">Connect</button>
          <button class="btn">Cancel</button>
        </div>
      </section>

      <nav class="rail">
        <div class="rail-top"><svg viewBox="0 0 10 20"><path d="M1 1l8 9-8 9"/></svg></div>
        <div class="rail-cell"><svg class="gear-ic"><use href="#gear"/></svg></div>
        <div class="rail-cell on"><svg viewBox="0 0 30 36"><ellipse cx="15" cy="6" rx="13" ry="5"/><path d="M2 6v24c0 3 6 5 13 5s13-2 13-5V6M2 14c0 3 6 5 13 5s13-2 13-5M2 22c0 3 6 5 13 5s13-2 13-5"/></svg></div>
        <div class="rail-cell"><svg viewBox="0 0 38 36"><path d="M2 2h34L23 18v16l-7-3V18z"/></svg></div>
        <div class="rail-cell"><svg viewBox="0 0 38 34"><path d="M24 32H5a2 2 0 0 1-2-2V4a2 2 0 0 1 2-2h24a2 2 0 0 1 2 2v12M3 28l12-14 7 8"/><circle cx="11" cy="8" r="2"/><circle cx="30" cy="26" r="6"/><circle cx="30" cy="26" r="2"/></svg></div>
      </nav>
    </div>
  </div>

  <div class="dim">
    <div class="dialog">
      <div class="dlg-head">
        <span class="dlg-title">DataSource</span>
        <svg class="dlg-x" viewBox="0 0 16 16"><path d="M1 1l14 14M15 1L1 15"/></svg>
      </div>
      <div class="dlg-body">
        <svg class="dlg-err" viewBox="0 0 65 65"><circle cx="32.500" cy="32.500" r="32.500" fill="#ff5053"/><path d="M19 19l27 27M46 19L19 46" stroke="#fff" stroke-width="5"/></svg>
        <span>A call to SSPI failed, see inner exception.</span>
      </div>
      <div class="dlg-foot"><button class="dlg-ok">OK</button></div>
    </div>
  </div>
</body>
</html>
```
FILE: styles.css
```css
html, body {
  margin: 0;
  padding: 0;
}
body {
  position: relative;
  width: 3840px;
  height: 2160px;
  overflow: hidden;
  display: flex;
  flex-direction: column;
  font-family: Roboto, "Noto Sans CJK SC", sans-serif;
  background: #fff;
  color: #333;
}
.defs {
  position: absolute;
}
.ico-t {
  font-family: Roboto, "Noto Sans CJK SC", sans-serif;
  font-weight: 700;
}

/* browser chrome */
.chrome {
  flex: none;
  height: 222px;
  border-bottom: 2px solid #d5d6da;
  box-sizing: border-box;
}
.tabstrip {
  height: 84px;
  box-sizing: border-box;
  padding: 30px 0 0 17px;
  background: #dfe1e5;
  display: flex;
  align-items: flex-start;
}
.tab {
  flex: none;
  width: 60px;
  height: 40px;
  border-right: 2px solid #9b9da0;
  display: flex;
  align-items: center;
  justify-content: center;
}
.tab.wide {
  width: 74px;
}
.tab.mid {
  width: 62px;
}
.fav {
  width: 32px;
  height: 32px;
}
.tab.active {
  position: relative;
  width: 62px;
  height: 68px;
  margin: -14px 0 0 -2px;
  padding-left: 2px;
  border-right: 0;
  background: #fff;
  border-radius: 14px 14px 0 0;
}
.tab.active::before,
.tab.active::after {
  content: "";
  position: absolute;
  bottom: 0;
  width: 14px;
  height: 14px;
  background: radial-gradient(circle at 0 0, #dfe1e5 14px, #fff 14.5px);
}
.tab.active::before {
  left: -14px;
}
.tab.active::after {
  right: -14px;
  background: radial-gradient(circle at 100% 0, #dfe1e5 14px, #fff 14.5px);
}
.tab-x {
  width: 16px;
  height: 16px;
  fill: none;
  stroke: #3c4043;
  stroke-width: 2;
}
.new-tab {
  margin: 8px 0 0 32px;
  width: 24px;
  height: 24px;
  fill: none;
  stroke: #3c4043;
  stroke-width: 3;
}

.omnirow {
  height: 72px;
  padding: 8px 0 0 31px;
  box-sizing: border-box;
  display: flex;
  align-items: flex-start;
}
.nav-btn {
  width: 28px;
  height: 28px;
  margin: 14px 36px 0 0;
  fill: none;
  stroke: #5f6368;
  stroke-width: 3;
}
.nav-btn.off {
  stroke: #bdc1c6;
}
.nav-btn.reload {
  margin-right: 29px;
}
.nav-btn .solid {
  fill: #5f6368;
  stroke: none;
}
.omnibox {
  width: 2768px;
  height: 56px;
  border-radius: 28px;
  background: #f0f2f4;
  display: flex;
  align-items: center;
  box-sizing: border-box;
  padding: 0 20px 0 27px;
}
.lock {
  width: 18px;
  height: 22px;
}
.url {
  margin-left: 25px;
  font-size: 29.500px;
  color: #202124;
  flex: 1;
}
.omni-ic {
  margin-left: 33px;
  height: 30px;
  width: 32px;
}
.key {
  height: 22px;
}
.ext-pill {
  width: 692px;
  height: 56px;
  margin-left: 19px;
  box-sizing: border-box;
  border: 3px solid #e2e3e6;
  border-radius: 28px;
  display: flex;
  align-items: center;
  padding-left: 5px;
  gap: 32px;
}
.ext {
  flex: none;
  width: 32px;
  height: 32px;
}
.badge-wrap {
  position: relative;
}
.ext-in {
  display: block;
  width: 32px;
  height: 32px;
}
.badge {
  position: absolute;
  top: 20px;
  text-align: center;
  font-size: 20px;
  line-height: 24px;
  border-radius: 3px;
}
.badge.cyan {
  left: -3px;
  width: 40px;
  background: #a4e3e8;
  color: #4f6a6e;
}
.badge.red {
  left: 21px;
  width: 24px;
  background: #ff5a5f;
  color: #fff;
}
.avatar {
  width: 28px;
  height: 42px;
  margin: 8px 0 0 24px;
}
.kebab {
  width: 6px;
  height: 30px;
  margin: 14px 0 0 46px;
  fill: #5f6368;
}

.bookmarks {
  height: 64px;
  padding-left: 31px;
  display: flex;
  align-items: center;
  font-size: 25px;
  letter-spacing: 0.15px;
  color: #3c4043;
}
.bm {
  flex: none;
  display: flex;
  align-items: center;
  gap: 15px;
  margin-right: 33px;
  white-space: nowrap;
}
.bm.trunc {
  width: 275px;
}
.bm .cjk {
  font-size: 23.500px;
  letter-spacing: 0;
}
.bm .jobs {
  letter-spacing: 0.8px;
}
.apps {
  width: 28px;
  height: 28px;
  margin-right: 2px;
}
.folder {
  width: 33px;
  height: 26px;
}
.bm-fav {
  flex: none;
  width: 32px;
  height: 32px;
}
.bm-sep {
  margin-left: auto;
  width: 1px;
  height: 32px;
  margin-right: 21px;
  background: #c8c8c8;
}

/* report designer */
.app {
  flex: 1;
  min-height: 0;
  display: flex;
  flex-direction: column;
  background: #fff;
}
.app-head {
  flex: none;
  height: 80px;
  box-sizing: border-box;
  border-bottom: 3px solid #e0e0e0;
  display: flex;
  align-items: flex-start;
  position: relative;
}
.back {
  width: 36px;
  height: 34px;
  margin: 21px 24px 0 32px;
  fill: none;
  stroke: #5a5a5a;
  stroke-width: 3.500;
}
.doc-name {
  width: 360px;
  height: 55px;
  margin-top: 12px;
  box-sizing: border-box;
  padding-left: 17px;
  border: 2px solid #dcdcdc;
  border-radius: 6px;
  font-size: 24px;
  line-height: 50px;
  color: #555;
}
.saved-check {
  width: 22px;
  height: 16px;
  margin: 35px 9px 0 17px;
  fill: none;
  stroke: #55b868;
  stroke-width: 2.500;
}
.saved {
  margin-top: 27px;
  font-size: 23.900px;
  line-height: 30px;
  color: #6b6b6b;
}
.mode {
  position: absolute;
  left: 1749px;
  top: 13px;
  display: flex;
  height: 54px;
  box-sizing: border-box;
  border: 2px solid #cfcfcf;
  border-radius: 5px;
  font-size: 24px;
  font-weight: 500;
}
.mode-btn {
  width: 174px;
  text-align: center;
  line-height: 50px;
  color: #6b6b6b;
}
.mode-btn.on {
  margin: -2px 0 -2px -2px;
  line-height: 54px;
  background: #3482ff;
  color: #fff;
  border-radius: 5px 0 0 5px;
}
.publish {
  position: absolute;
  right: 20px;
  top: 10px;
  height: 59px;
  width: 185px;
  box-sizing: border-box;
  border: 2px solid #3482ff;
  border-radius: 6px;
  display: flex;
  font-size: 26px;
  color: #3482ff;
}
.pub-main {
  flex: 1;
  text-align: center;
  line-height: 55px;
  border-right: 2px solid #3482ff;
}
.pub-arrow {
  width: 47px;
  display: flex;
  align-items: center;
  justify-content: center;
}
.pub-arrow i {
  width: 0;
  height: 0;
  border: 8px solid transparent;
  border-top: 10px solid #3482ff;
  border-bottom: 0;
}

.toolbar {
  flex: none;
  height: 72px;
  box-sizing: border-box;
  border-bottom: 3px solid #e0e0e0;
  display: flex;
  align-items: stretch;
  position: relative;
}
.tb-group {
  display: flex;
  align-items: center;
  border-right: 2px solid #e0e0e0;
  box-sizing: border-box;
  padding-top: 3px;
}
.g1 { width: 266px; padding-left: 10px; }
.g2 { width: 140px; padding-left: 7px; }
.g3 { width: 222px; padding-left: 6px; }
.g4 { width: 96px; padding-left: 25px; }
.g5 { width: 142px; padding-left: 6px; }
.g6 { width: 387px; padding-left: 5px; }
.g7 { width: 147px; padding-left: 6px; }
.g8 { width: 91px; padding-left: 1px; }
.g9 { width: 132px; padding-left: 3px; }
.tb {
  width: 32px;
  height: 32px;
  padding: 0 15px;
  flex: none;
  fill: none;
  stroke: #5c5c5c;
  stroke-width: 2.500;
}
.tb.off {
  stroke: #d2d2d2;
}
.tb .fillish {
  fill: #d2d2d2;
}
.tb .solid-off {
  fill: #d2d2d2;
  stroke: none;
}
.zoom-pct {
  width: 80px;
  text-align: center;
  font-size: 23px;
  color: #666;
}
.tb-fill {
  width: 34px;
  height: 36px;
}
.tb-chev {
  width: 14px;
  height: 10px;
  margin-left: 4px;
  fill: none;
  stroke: #d2d2d2;
  stroke-width: 1.500;
}
.tb-chev.dark {
  stroke: #666;
  margin-left: 6px;
}
.view-btn {
  margin-left: auto;
  margin-right: 24px;
  padding-top: 4px;
  display: flex;
  align-items: center;
  font-size: 23px;
  color: #666;
}
.view-ic {
  width: 25px;
  height: 25px;
  margin-right: 12px;
  fill: #555;
}

.workspace {
  flex: 1;
  min-height: 0;
  display: flex;
}

/* widget list */
.widgets {
  flex: none;
  width: 323px;
  display: flex;
  flex-direction: column;
  position: relative;
  z-index: 1;
}
.search-row {
  flex: none;
  height: 82px;
  box-sizing: border-box;
  padding: 13px 0 0 13px;
  position: relative;
}
.search {
  width: 271px;
  height: 58px;
  box-sizing: border-box;
  border: 2px solid #dedede;
  border-radius: 6px;
  padding: 0 20px 0 24px;
  display: flex;
  align-items: center;
  justify-content: space-between;
  font-size: 25px;
  color: #888;
}
.search svg {
  width: 18px;
  height: 24px;
  fill: none;
  stroke: #777;
  stroke-width: 2;
}
.collapse {
  position: absolute;
  left: 297px;
  top: 17px;
  width: 52px;
  height: 52px;
  box-sizing: border-box;
  border: 2px solid #d8d8d8;
  border-radius: 50%;
  background: #fff;
  display: flex;
  align-items: center;
  justify-content: center;
}
.collapse svg {
  width: 10px;
  height: 20px;
  fill: none;
  stroke: #666;
  stroke-width: 2;
}
.w-list {
  flex: 1;
  min-height: 0;
  overflow: hidden;
}
.w-head {
  height: 62px;
  box-sizing: border-box;
  border-top: 2px solid #e0e0e0;
  border-bottom: 2px solid #e0e0e0;
  padding: 0 23px 2px 31px;
  display: flex;
  align-items: center;
  justify-content: space-between;
  font-size: 23.500px;
  font-weight: 500;
  color: #5c5c5c;
}
.w-head i {
  width: 17px;
  height: 2.500px;
  margin-top: 3px;
  background: #555;
}
.w-grid {
  display: grid;
  grid-template-columns: 163px 160px;
  grid-auto-rows: 151px;
}
.w-grid.cut {
  grid-auto-rows: 36px;
}
.widget {
  box-sizing: border-box;
  padding-top: 30px;
  text-align: center;
  font-size: 20px;
  line-height: 28px;
  color: #6e6e6e;
  border-bottom: 2px solid #e0e0e0;
}
.widget span {
  display: block;
  max-width: 125px;
  margin: 0 auto;
}
.w-grid .widget:nth-child(odd) {
  border-right: 2px solid #e0e0e0;
}
.w-grid .widget:nth-last-child(-n+2) {
  border-bottom: 0;
}
.w-ic {
  display: block;
  width: 56px;
  height: 56px;
  margin: 0 auto 7px;
}
.w-ic-cut {
  display: block;
  width: 56px;
  height: 5px;
  margin: 0 auto;
}
.glyph-a {
  height: 56px;
  margin-bottom: 7px;
  overflow: hidden;
  font-family: "Liberation Serif", serif;
  font-size: 78px;
  line-height: 56px;
  color: #ff9a5c;
}

/* canvas and bands */
.design {
  flex: 1;
  min-width: 0;
  display: flex;
  flex-direction: column;
  background: #eeeeee;
}
.design-scroll {
  flex: 1;
  min-height: 0;
  padding: 20px 4px 0 22px;
}
.canvas {
  height: 1378px;
  box-sizing: border-box;
  border-top: 3px solid #dcdcdc;
  display: flex;
  flex-direction: column;
  background: #fff;
}
.band {
  position: relative;
  background-color: #fff;
  background-image:
    linear-gradient(#e3e3e3 2px, transparent 2px),
    linear-gradient(90deg, #e3e3e3 2px, transparent 2px),
    linear-gradient(#f2f2f2 2px, transparent 2px),
    linear-gradient(90deg, #f2f2f2 2px, transparent 2px);
  background-size: 100px 100px, 100px 100px, 25px 25px, 25px 25px;
}
.body-band {
  height: 601px;
  flex: none;
  background-position: 0 -2px, 0 0, 0 -2px, 0 0;
}
.foot-band {
  flex: 1;
}
.band-line {
  flex: none;
  height: 4px;
  background: #3482ff;
  position: relative;
  z-index: 1;
}
.band-tag {
  position: absolute;
  left: 0;
  top: 0;
  width: 128px;
  height: 40px;
  box-sizing: border-box;
  padding-left: 24px;
  background: #3482ff;
  border-radius: 0 0 20px 0;
  color: #fff;
  font-size: 20px;
  line-height: 36px;
}

.report {
  position: absolute;
  width: 574px;
  display: grid;
  grid-template-columns: 191px 191px 192px;
  grid-template-rows: 48px 1fr;
  box-sizing: border-box;
  background: #fff;
  border: 2px solid #d4d4d4;
  font-family: "Liberation Sans", Arial, sans-serif;
  font-size: 26.670px;
  color: #000;
}
.t1 { left: 42px; top: 44px; height: 248px; }
.t2 { left: 635px; top: 42px; height: 266px; }
.t3 { left: 1219px; top: 45px; height: 267px; }
.t4 { left: 1813px; top: 56px; height: 232px; }
.cell {
  box-sizing: border-box;
  padding: 2px 0 0 4px;
  border-right: 1px solid #d4d4d4;
  line-height: 36px;
  white-space: nowrap;
}
.cell.head {
  padding-top: 1px;
  border-bottom: 3px solid #d4d4d4;
  line-height: 38px;
}
.cell.img {
  margin: -3px -2px -2px 0;
  border-top: 2px dotted #000;
  border-bottom: 2px dotted #000;
  border-right: 1px dashed #000;
  padding: 0;
  display: flex;
  align-items: center;
  justify-content: center;
}
.picked .cell.head:first-child {
  border: 1px dashed #555;
  border-top: 2px dotted #555;
  border-bottom: 2px dotted #555;
  margin: -2px 0 0 -2px;
}
.pic {
  width: 120px;
  height: 92px;
  margin-top: 3px;
}

.groups-bar {
  flex: none;
  height: 56px;
  box-sizing: border-box;
  border-top: 2px solid #e0e0e0;
  border-right: 4px solid #e0e0e0;
  background: #fff;
  display: flex;
  align-items: center;
  font-size: 24px;
  color: #666;
  position: relative;
}
.groups-half {
  display: flex;
  align-items: center;
  box-sizing: border-box;
}
.groups-half.first {
  width: 1271px;
  padding-left: 15px;
}
.groups-half span {
  margin-left: 11px;
}
.grp-ic {
  width: 30px;
  height: 22px;
  fill: none;
  stroke: #555;
  stroke-width: 2;
}
.grp-up {
  position: absolute;
  left: 2477px;
  top: 16px;
  width: 14px;
  height: 18px;
  fill: none;
  stroke: #777;
  stroke-width: 1.500;
}

/* right panel */
.props {
  flex: none;
  width: 929px;
  box-sizing: border-box;
  border-left: 1px solid #e0e0e0;
  display: flex;
  flex-direction: column;
  background: #fff;
}
.props-form {
  flex: 1;
  padding: 0 31px 0 20px;
}
.props-title {
  margin: 14px 0 0 4px;
  height: 40px;
  display: flex;
  align-items: center;
  font-size: 29.500px;
  font-weight: 500;
  color: #5c5c5c;
}
.props-title svg {
  width: 34px;
  height: 36px;
  margin-right: 23px;
  fill: none;
  stroke: #666;
  stroke-width: 3;
}
.props-title .db-solid {
  fill: #666;
}
.props-form label {
  display: block;
  height: 32px;
  line-height: 32px;
  font-size: 24px;
  font-weight: 500;
  color: #5e5e5e;
}
.props-title + label {
  margin-top: 19px;
}
.field {
  box-sizing: border-box;
  height: 56px;
  margin: 16px 0 12px -1px;
  padding: 0 22px;
  border: 2px solid #d4d4d4;
  border-radius: 6px;
  font-size: 24px;
  line-height: 52px;
  color: #727272;
}
.field.name {
  margin-bottom: 17px;
}
.field.area {
  width: 874px;
  height: 154px;
  padding-top: 11px;
  line-height: 44px;
  margin-bottom: 22px;
  white-space: nowrap;
}
.field.select {
  width: 874px;
  position: relative;
}
.field.select svg {
  position: absolute;
  right: 11px;
  top: 21px;
  width: 22px;
  height: 14px;
  fill: none;
  stroke: #777;
  stroke-width: 1.500;
}
.field.secret {
  font-size: 23px;
  margin-bottom: 14px;
}
.save-pw {
  display: flex;
  align-items: center;
  height: 28px;
  font-size: 24px;
  font-weight: 500;
  color: #5e5e5e;
}
.save-pw i {
  width: 26px;
  height: 28px;
  box-sizing: border-box;
  border: 2px solid #d4d4d4;
  border-radius: 5px;
  margin: 0 11px 0 -3px;
}
.props-foot {
  flex: none;
  height: 105px;
  margin: 0 15px 0 18px;
  box-sizing: border-box;
  border-top: 3px solid #e0e0e0;
  padding-top: 19px;
  display: flex;
  justify-content: flex-end;
  gap: 29px;
}
.btn {
  width: 219px;
  height: 64px;
  background: #3482ff;
  color: #fff;
  border: 0;
  border-radius: 6px;
  font-family: inherit;
  font-size: 25px;
  font-weight: 400;
}
.rail {
  flex: none;
  width: 69px;
  border-left: 1px solid #e0e0e0;
  background: #fff;
}
.rail-top {
  height: 34px;
  border-bottom: 2px solid #e0e0e0;
  display: flex;
  align-items: center;
  padding-left: 14px;
}
.rail-top svg {
  width: 10px;
  height: 20px;
  fill: none;
  stroke: #666;
  stroke-width: 2;
}
.rail-cell {
  height: 68px;
  border-bottom: 2px solid #e0e0e0;
  display: flex;
  align-items: center;
  justify-content: center;
  color: #666;
}
.rail-cell svg {
  width: 38px;
  height: 36px;
  fill: none;
  stroke: #666;
  stroke-width: 2.500;
}
.rail-cell .gear-ic {
  stroke: none;
}
.rail-cell.on {
  background: #3482ff;
  border-bottom: 0;
  height: 70px;
}
.rail-cell.on svg {
  stroke: #fff;
}

/* modal */
.dim {
  position: absolute;
  left: 0;
  top: 222px;
  right: 0;
  bottom: 0;
  z-index: 5;
  background: rgba(0, 0, 0, 0.4);
  box-sizing: border-box;
  padding: 836px 0 0 1405px;
}
.dialog {
  width: 1036px;
  height: 349px;
  background: #fff;
  border-radius: 4px;
  box-shadow: 0 2px 6px rgba(0, 0, 0, 0.3);
  display: flex;
  flex-direction: column;
}
.dlg-head {
  height: 71px;
  flex: none;
  padding: 0 45px 0 20px;
  background: #f9f9f9;
  border-radius: 4px 4px 0 0;
  display: flex;
  align-items: center;
  justify-content: space-between;
}
.dlg-title {
  font-size: 27.500px;
  font-weight: 500;
  color: #000;
}
.dlg-x {
  width: 16px;
  height: 16px;
  fill: none;
  stroke: #666;
  stroke-width: 1.800;
}
.dlg-body {
  flex: 1;
  padding: 59px 0 0 42px;
  display: flex;
  align-items: flex-start;
  font-size: 26px;
  color: #333;
}
.dlg-body span {
  margin: 20px 0 0 31px;
}
.dlg-err {
  width: 65px;
  height: 65px;
}
.dlg-foot {
  flex: none;
  height: 75px;
  padding-right: 42px;
  display: flex;
  justify-content: flex-end;
}
.dlg-ok {
  width: 148px;
  height: 55px;
  background: #fff;
  border: 2px solid #bdbdbd;
  border-radius: 6px;
  font-family: inherit;
  font-size: 24px;
  font-weight: 500;
  color: #333;
}
```
